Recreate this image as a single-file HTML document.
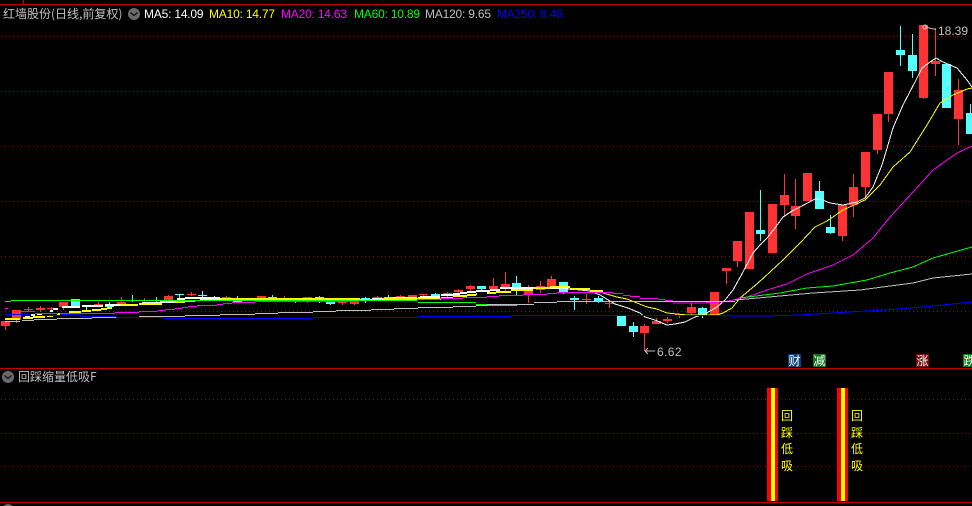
<!DOCTYPE html>
<html><head><meta charset="utf-8"><style>
html,body{margin:0;padding:0;background:#000;width:972px;height:506px;overflow:hidden}
#w{position:relative;width:972px;height:506px;background:#000;overflow:hidden}
svg{position:absolute;left:0;top:0}
.t{position:absolute;white-space:nowrap;font:12px/14px "Liberation Sans",sans-serif;letter-spacing:-.2px}
.c{position:absolute;white-space:nowrap;font:12px/14px "WenQuanYi Zen Hei","Noto Sans CJK SC",sans-serif;color:#c0c0c0}
.b{position:absolute;width:13px;height:13px;top:354px;font:12px/13px "WenQuanYi Zen Hei","Noto Sans CJK SC",sans-serif;color:#fff;text-align:center;overflow:hidden}
.v{position:absolute;width:12px;height:14px;font:12px/14px "WenQuanYi Zen Hei","Noto Sans CJK SC",sans-serif;color:#ff0;text-align:center}
</style></head><body><div id="w">
<svg width="972" height="506" viewBox="0 0 972 506" fill="none">
<defs><pattern id="d" x="1" y="0" width="4" height="1" patternUnits="userSpaceOnUse"><rect width="1" height="1" fill="#900808"/></pattern></defs>
<g fill="url(#d)" shape-rendering="crispEdges">
<rect x="0" y="36" width="972" height="1"/><rect x="0" y="91" width="972" height="1"/><rect x="0" y="146" width="972" height="1"/><rect x="0" y="201" width="972" height="1"/><rect x="0" y="256" width="972" height="1"/><rect x="0" y="311" width="972" height="1"/><rect x="0" y="399" width="972" height="1"/><rect x="0" y="433" width="972" height="1"/><rect x="0" y="466" width="972" height="1"/>
</g>
<g stroke="#c00000" stroke-width="1" shape-rendering="crispEdges">
<path d="M0 4.500H972M23.500 0V4M0 368.500H972M0 502.500H972"/>
</g>
<g shape-rendering="crispEdges">
<path fill="#ff3333" d="M1 321h9v5h-9zM5 321h1v9h-1zM12 310h9v10h-9zM16 310h1v13h-1zM24 309h9v1h-9zM28 307h1v4h-1zM36 308h9v2h-9zM40 306h1v6h-1zM47 308h9v1h-9zM51 307h1v3h-1zM59 302h9v5h-9zM63 302h1v8h-1zM94 304h9v1h-9zM98 302h1v4h-1zM117 302h9v3h-9zM121 297h1v8h-1zM140 300h9v1h-9zM144 298h1v4h-1zM164 296h9v4h-9zM168 295h1v5h-1zM187 294h9v1h-9zM191 292h1v4h-1zM222 297h9v2h-9zM226 296h1v3h-1zM257 296h9v2h-9zM280 298h9v1h-9zM284 296h1v6h-1zM303 297h9v3h-9zM307 297h1v6h-1zM338 300h9v3h-9zM342 298h1v7h-1zM350 298h9v6h-9zM354 298h1v7h-1zM373 297h9v1h-9zM377 296h1v4h-1zM396 296h9v2h-9zM400 295h1v4h-1zM408 295h9v2h-9zM419 294h9v1h-9zM423 294h1v2h-1zM443 293h9v2h-9zM447 292h1v5h-1zM454 290h9v2h-9zM458 289h1v5h-1zM466 286h9v3h-9zM470 285h1v6h-1zM489 286h9v3h-9zM493 278h1v13h-1zM501 284h9v4h-9zM505 272h1v19h-1zM524 289h9v5h-9zM528 285h1v18h-1zM536 286h9v4h-9zM540 281h1v12h-1zM547 279h9v8h-9zM551 276h1v11h-1zM582 299h9v1h-9zM586 294h1v10h-1zM605 303h9v1h-9zM609 300h1v8h-1zM640 326h9v7h-9zM644 324h1v27h-1zM652 321h9v3h-9zM656 318h1v6h-1zM663 319h9v2h-9zM667 317h1v6h-1zM675 314h9v2h-9zM679 314h1v4h-1zM687 307h9v6h-9zM691 303h1v12h-1zM710 292h9v24h-9zM722 268h9v3h-9zM726 268h1v16h-1zM733 241h9v20h-9zM737 241h1v26h-1zM745 212h9v57h-9zM768 204h9v49h-9zM780 195h9v10h-9zM784 174h1v41h-1zM791 206h9v10h-9zM795 179h1v50h-1zM803 173h9v28h-9zM838 205h9v31h-9zM842 205h1v36h-1zM849 187h9v18h-9zM853 174h1v43h-1zM861 152h9v35h-9zM865 152h1v45h-1zM873 114h9v36h-9zM877 114h1v40h-1zM884 72h9v42h-9zM888 72h1v50h-1zM919 25h9v73h-9zM923 25h1v74h-1zM931 61h9v3h-9zM935 28h1v48h-1zM954 90h9v29h-9zM958 79h1v66h-1z"/>
<path fill="#54ffff" d="M71 299h9v8h-9zM82 306h9v1h-9zM86 305h1v5h-1zM105 304h9v3h-9zM109 302h1v6h-1zM128 300h9v1h-9zM132 295h1v7h-1zM152 300h9v1h-9zM156 297h1v5h-1zM175 294h9v1h-9zM179 294h1v4h-1zM198 295h9v1h-9zM202 291h1v6h-1zM210 298h9v1h-9zM214 296h1v4h-1zM233 299h9v3h-9zM237 296h1v6h-1zM268 297h9v1h-9zM272 295h1v4h-1zM291 298h9v3h-9zM295 298h1v5h-1zM315 297h9v3h-9zM319 296h1v7h-1zM326 301h9v3h-9zM330 301h1v4h-1zM361 298h9v3h-9zM365 297h1v6h-1zM384 297h9v1h-9zM388 295h1v4h-1zM431 294h9v2h-9zM435 293h1v4h-1zM477 286h9v3h-9zM481 286h1v5h-1zM512 283h9v6h-9zM516 276h1v19h-1zM559 282h9v10h-9zM563 282h1v12h-1zM570 298h9v2h-9zM574 296h1v14h-1zM594 298h9v3h-9zM598 296h1v7h-1zM617 316h9v10h-9zM629 326h9v6h-9zM633 322h1v15h-1zM698 308h9v7h-9zM702 307h1v11h-1zM756 230h9v4h-9zM760 190h1v51h-1zM815 191h9v18h-9zM819 181h1v28h-1zM826 227h9v6h-9zM830 215h1v19h-1zM896 50h9v5h-9zM900 26h1v40h-1zM908 55h9v16h-9zM912 34h1v44h-1zM942 64h9v44h-9zM966 113h6v21h-6zM970 104h1v30h-1z"/>
</g>
<g shape-rendering="crispEdges" stroke-linejoin="round">
<path stroke-width="2" stroke="#ffffff" d="M5 319H20M25 317H30M31 315H35M37 314H42M50 311H53M53 309H58M62 307H80M82 306H103M105 305H138M142 303H160M160 302H175M177 299H185M185 298H220M233 299H360M360 300H372M372 299H393M393 298H417M418 298H420M420 297H440M441 295H453M453 294H460M460 293H467M467 292H476M476 291H490M490 290H500M500 288H560"/>
<polyline stroke-width="1" stroke="#ffffff" points="560,288 570,289 590,291 600,295 605,298 615,304 628,308 640,313 645,317 655,320 667,325 675,324 685,322 695,317 705,314 717,307 725,300 733,290 743,272 753,253 760,245 767,238 775,228 783,217 792,211 800,207 815,199 820,199 830,203 843,205 857,202 865,198 873,187 882,165 893,128 903,105 915,82 922,68 930,62 936,58 943,62 957,68 967,80 972,87"/>
<path stroke-width="2" stroke="#ffff00" d="M5 319H20M23 318H33M33 317H45M47 316H53M57 314H61M69 312H81M82 311H91M92 310H101M101 309H107M107 308H112M120 305H138M139 304H162M175 302H185M185 301H195M200 300H220M220 299H360M360 300H383M383 299H417M417 299H441M441 298H453M453 296H467M467 295H476M476 294H477M487 293H496M496 292H511M511 290H533M533 288H550M550 287H570M570 289H590M590 291H603"/>
<polyline stroke-width="1" stroke="#ffff00" points="603,293 617,297 627,299 637,303 647,307 657,309 667,313 677,314 687,315 717,315 723,313 732,308 740,298 758,283 783,260 800,243 815,227 827,221 843,210 865,200 880,185 893,167 910,152 927,125 940,103 953,95 967,89 972,88"/>
<path transform="translate(0 .5)" stroke-width="1" stroke="#ff00ff" d="M5 308H8M13 311H35M35 313H58M60 313H115M115 312H139M139 311H158M158 310H165M165 309H175M175 308H182M182 307H188M188 306H197M197 305H217M217 304H223M223 303H232M232 302H255M255 301H355M355 300H417M417 299H440M440 298H463M463 297H487M487 296H499M499 295H523M523 294H547M547 293H557M557 292H613M613 293H623M623 295H630M630 296H640M640 298H658M658 299H665M665 300H673"/>
<polyline stroke-width="1" stroke="#ff00ff" points="673,303 700,303 723,302 747,297 767,290 787,284 807,274 833,265 853,255 873,238 890,217 913,192 933,170 957,153 972,146"/>
<path transform="translate(0 .5)" stroke-width="1" stroke="#00ff00" d="M5 301H11M11 300H417M418 302H476M476 304H487M487 305H517M517 304H523"/>
<polyline stroke-width="1" stroke="#00ff00" points="740,298 780,293 807,288 833,286 867,280 890,273 913,267 933,258 972,247"/>
<path transform="translate(0 .5)" stroke-width="1" stroke="#c0c0c0" d="M5 321H20M22 320H34M34 319H57M57 318H92M92 317H139M139 316H185M185 315H220M220 314H255M255 313H278M278 312H313M313 311H336M336 310H371M371 309H394M394 308H418M418 307H453M453 306H476M476 305H487M487 304H534M534 302H557M557 301H735"/>
<polyline stroke-width="1" stroke="#c0c0c0" points="735,300 780,296 813,293 860,290 890,286 913,283 933,278 972,274"/>
<path transform="translate(0 .5)" stroke-width="1" stroke="#0000ff" d="M5 314H30M35 315H60M60 314H81M81 316H116M116 317H163M163 318H313M313 317H418M418 316H511M511 315H730"/>
<polyline stroke-width="1" stroke="#0000ff" points="730,316 765,316 800,315 833,313 867,311 900,309 933,306 972,302"/>
</g>
<rect x="767" y="388" width="11" height="113" fill="#ff0000"/><rect x="771" y="388" width="4" height="113" fill="#ffff00"/>
<rect x="837" y="388" width="11" height="113" fill="#ff0000"/><rect x="841" y="388" width="4" height="113" fill="#ffff00"/>
<circle cx="134" cy="14" r="6" fill="#6a6a6a"/><path d="M130.500 12.500L134 15.500L137.500 12.500" stroke="#111" stroke-width="1.300"/>
<circle cx="8" cy="377" r="6" fill="#6a6a6a"/><path d="M4.500 375.500L8 378.500L11.500 375.500" stroke="#111" stroke-width="1.300"/>
<circle cx="8" cy="510" r="6" fill="#6a6a6a"/>
<path d="M925 27L936 29.500" stroke="#c0c0c0"/><circle cx="925" cy="27" r="2" stroke="#c0c0c0"/>
<path d="M645 351H655M645 351L648 348M645 351L648 354" stroke="#c0c0c0"/>
</svg>
<div class="c" style="left:3px;top:7px">红墙股份(日线,前复权)</div>
<div class="t" style="left:144px;top:7px;color:#fff">MA5: 14.09</div>
<div class="t" style="left:209px;top:7px;color:#ff0">MA10: 14.77</div>
<div class="t" style="left:281px;top:7px;color:#f0f">MA20: 14.63</div>
<div class="t" style="left:354px;top:7px;color:#0f0">MA60: 10.89</div>
<div class="t" style="left:425px;top:7px;color:#c0c0c0">MA120: 9.65</div>
<div class="t" style="left:497px;top:7px;color:#00f">MA250: 8.48</div>
<div class="t" style="left:938px;top:24px;color:#c0c0c0;letter-spacing:0">18.39</div>
<div class="t" style="left:657px;top:345px;color:#c0c0c0;letter-spacing:.4px">6.62</div>
<div class="b" style="left:788px;background:#0f3f73">财</div>
<div class="b" style="left:813px;background:#0a7a1a">减</div>
<div class="b" style="left:916px;background:#7a0a0a">涨</div>
<div class="b" style="left:963px;background:#0a7a1a">跌</div>
<div class="c" style="left:18px;top:370px">回踩缩量低吸F</div>
<div class="v" style="left:781px;top:409px">回</div>
<div class="v" style="left:781px;top:426px">踩</div>
<div class="v" style="left:781px;top:442px">低</div>
<div class="v" style="left:781px;top:459px">吸</div>
<div class="v" style="left:851px;top:409px">回</div>
<div class="v" style="left:851px;top:426px">踩</div>
<div class="v" style="left:851px;top:442px">低</div>
<div class="v" style="left:851px;top:459px">吸</div>
</div></body></html>
